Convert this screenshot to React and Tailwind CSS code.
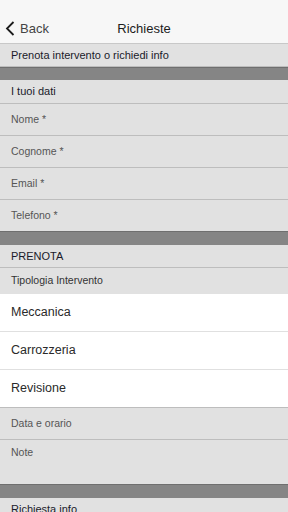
export default function App() {
  const font = { fontFamily: '"Liberation Sans", Arial, sans-serif' };
  const grayRow = "flex items-center bg-[#e1e1e1] border-b border-[#bdbdbd] pl-[11px]";
  const whiteRow = "flex items-center bg-white border-b border-[#e0e0e0] pl-[11px] h-[38px] text-[12.5px] text-[#2a2a2a]";
  const band = "bg-[#858585] border-t border-[#6f6f6f]";

  return (
    <div className="w-[288px] h-[512px] overflow-hidden bg-[#e1e1e1]" style={font}>
      {/* Nav bar */}
      <div className="h-[44px] bg-[#f7f7f7] border-b border-[#c8c8c8] pt-[14px] relative">
        <div className="h-[29px] flex items-center justify-center text-[13px] text-[#1c1c1c]">
          Richieste
        </div>
        <div className="absolute left-[5px] top-[14px] h-[29px] flex items-center gap-[5px]">
          <svg width="10" height="15" viewBox="0 0 10 15">
            <path d="M8.5 1 L2 7.5 L8.5 14" fill="none" stroke="#1c1c1c" strokeWidth="1.8" />
          </svg>
          <span className="text-[13px] text-[#444]">Back</span>
        </div>
      </div>

      <div className={`${grayRow} h-[23px] text-[11px] text-[#1a1a2a]`}>
        Prenota intervento o richiedi info
      </div>
      <div className={`${band} h-[13px]`} />

      <div className={`${grayRow} h-[24px] text-[11px] text-[#1a1a2a]`}>I tuoi dati</div>
      {["Nome *", "Cognome *", "Email *", "Telefono *"].map((t, i) => (
        <div key={t} className={`${grayRow} ${i === 3 ? "h-[31px] border-b-0" : "h-[32px]"} text-[10.5px] text-[#555]`}>
          {t}
        </div>
      ))}
      <div className={`${band} h-[14px]`} />

      <div className={`${grayRow} h-[23px] text-[11px] text-[#1a1a2a]`}>PRENOTA</div>
      <div className={`${grayRow} h-[26px] text-[10.5px] text-[#333] border-b-0`}>Tipologia Intervento</div>

      {["Meccanica", "Carrozzeria", "Revisione"].map((t, i) => (
        <div key={t} className={`${whiteRow} ${i === 2 ? "border-b-[#bdbdbd]" : ""}`}>
          {t}
        </div>
      ))}

      <div className={`${grayRow} h-[32px] text-[10.5px] text-[#555]`}>Data e orario</div>
      <div className="bg-[#e1e1e1] h-[44px] pl-[11px] pt-[5px] text-[10.5px] text-[#555]">Note</div>
      <div className={`${band} h-[14px]`} />
      <div className="bg-[#e1e1e1] pl-[11px] pt-[3px] text-[11px] text-[#1a1a2a] whitespace-nowrap">Richiesta info</div>
    </div>
  );
}
